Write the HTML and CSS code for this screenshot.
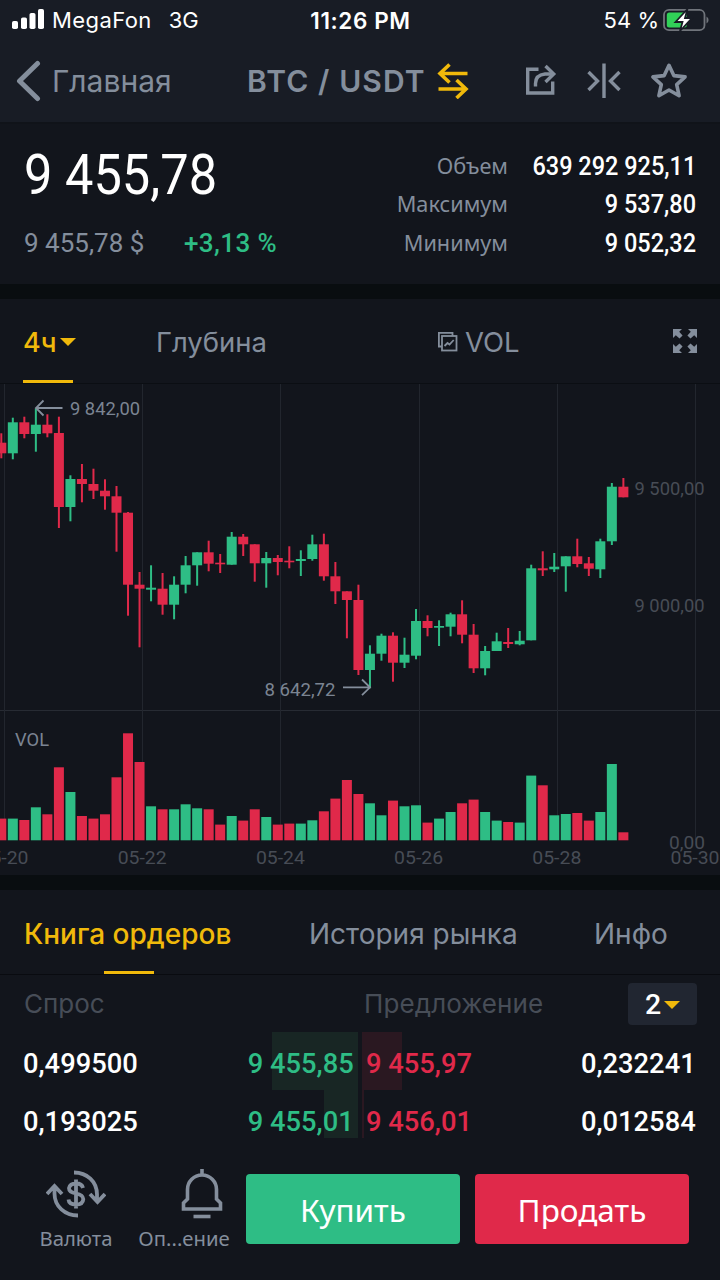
FILE: index.html
```html
<!DOCTYPE html>
<html lang="ru">
<head>
    <meta charset="UTF-8">
    <title>BTC / USDT</title>
    <link rel="stylesheet" href="styles.css">
    <script src="chart.js" defer></script>
</head>
<body>
  <header class="top">
    <div class="status">
      <div class="status-left">
        <svg class="signal" width="32" height="20" viewBox="0 0 32 20">
          <rect x="0" y="12" width="6" height="8" rx="1.8"/>
          <rect x="9" y="8.500" width="6" height="11.500" rx="1.800"/>
          <rect x="17.500" y="4" width="6" height="16" rx="1.800"/>
          <rect x="26" y="0" width="6" height="20" rx="1.800"/>
        </svg>
        <span class="carrier">MegaFon</span>
        <span class="network">3G</span>
      </div>
      <div class="status-time">11:26 PM</div>
      <div class="status-right">
        <span class="battery-text">54 %</span>
        <svg class="battery" width="46" height="24" viewBox="0 0 46 24">
          <rect x="1" y="1.800" width="40.500" height="20.400" rx="5" fill="none" stroke="#70747b" stroke-width="1.800"/>
          <rect x="3.800" y="4.500" width="20" height="15" rx="2.500" fill="#31d158"/>
          <path d="M43.500 8.500a4 4 0 0 1 0 7z" fill="#70747b"/>
          <path d="M24.500 1 12.500 14h7L17 23l12-13h-7z" fill="#fff" stroke="#181c25" stroke-width="1.800"/>
        </svg>
      </div>
    </div>
    <nav class="nav">
      <a class="back">
        <svg width="26" height="42" viewBox="0 0 26 42"><path d="M21.500 3.500 3.500 21l18 17.500" fill="none" stroke="currentColor" stroke-width="5" stroke-linecap="round" stroke-linejoin="round"/></svg>
        <span>Главная</span>
      </a>
      <div class="pair">
        <span>BTC / USDT</span>
        <svg width="32" height="36" viewBox="0 0 32 36" fill="none" stroke="currentColor" stroke-width="3.600">
          <path d="M30.500 10.500H3M12.500 1.500l-9.500 9 9.500 9M1.500 26H29M19.500 17l9.500 9-9.500 9"/>
        </svg>
      </div>
      <div class="actions">
        <svg class="share" width="32" height="34" viewBox="0 0 32 34" fill="none" stroke="currentColor" stroke-width="3.400">
          <path d="M13.500 5.200H2.700V29h25V17.500"/>
          <path d="M10.500 22.500v-3q0-8.500 9.500-9.500h8"/>
          <path d="M20.500 2 28.700 10l-8.200 8"/>
        </svg>
        <svg class="collapse" width="34" height="36" viewBox="0 0 34 36" fill="none" stroke="currentColor" stroke-width="3.400">
          <path d="M17 .5V35M1.500 9l9 9-9 9M32.500 9l-9 9 9 9"/>
        </svg>
        <svg class="star" width="38" height="38" viewBox="0 0 38 38" fill="none" stroke="currentColor" stroke-width="3.600" stroke-linejoin="round">
          <path d="m19 3.300 4.800 10.300 11.300 1.300-8.400 7.700 2.400 11.100L19 28l-10.100 5.700 2.400-11.100-8.400-7.700 11.300-1.300z"/>
        </svg>
      </div>
    </nav>
  </header>

  <section class="summary">
    <div class="price">
      <div class="last num">9 455,78</div>
      <div class="sub">
        <span class="fiat num">9 455,78 $</span>
        <span class="change num">+3,13 %</span>
      </div>
    </div>
    <div class="stats">
      <span class="label">Объем</span><span class="value num">639 292 925,11</span>
      <span class="label">Максимум</span><span class="value num">9 537,80</span>
      <span class="label">Минимум</span><span class="value num">9 052,32</span>
    </div>
  </section>

  <section class="chart-box">
    <div class="chart-tabs">
      <div class="interval">4ч <i class="caret"></i></div>
      <div class="depth">Глубина</div>
      <div class="indicator">
        <svg width="21" height="21" viewBox="0 0 21 21" fill="none" stroke="currentColor" stroke-width="1.800">
          <path d="M5 15.500H1.900V1.900h13.600V5"/>
          <rect x="5" y="5" width="14.500" height="14.500"/>
          <path d="m7.500 15 3-3 2 1.500 4.200-4.500"/>
        </svg>
        <span>VOL</span>
      </div>
      <svg class="fullscreen" width="24" height="24" viewBox="0 0 24 24" fill="currentColor">
        <path id="corner" d="M0 0h9L6.200 2.800 9.600 6.500 6.500 9.600 2.800 6.200 0 9z"/>
        <use href="#corner" transform="matrix(-1 0 0 1 24 0)"/>
        <use href="#corner" transform="matrix(1 0 0 -1 0 24)"/>
        <use href="#corner" transform="matrix(-1 0 0 -1 24 24)"/>
      </svg>
    </div>
    <svg class="chart" id="chart" width="720" height="492" viewBox="0 383 720 492"></svg>
  </section>

  <section class="orders">
    <div class="order-tabs">
      <div class="tab active">Книга ордеров</div>
      <div class="tab history">История рынка</div>
      <div class="tab info">Инфо</div>
    </div>
    <div class="book-head">
      <span class="bid-title">Спрос</span>
      <span class="ask-title">Предложение</span>
      <span class="decimals num">2 <i class="caret"></i></span>
    </div>
    <div class="book">
      <div class="row">
        <div class="bid"><i class="depth-bar" style="width:86px"></i><span class="num">0,499500</span><span class="num up">9 455,85</span></div>
        <div class="ask"><i class="depth-bar" style="width:40px"></i><span class="num down">9 455,97</span><span class="num">0,232241</span></div>
      </div>
      <div class="row">
        <div class="bid"><i class="depth-bar" style="width:34px"></i><span class="num">0,193025</span><span class="num up">9 455,01</span></div>
        <div class="ask"><i class="depth-bar" style="width:2px"></i><span class="num down">9 456,01</span><span class="num">0,012584</span></div>
      </div>
    </div>
  </section>

  <footer class="bottom">
    <div class="tool currency">
      <svg width="60" height="50" viewBox="0 0 60 50" fill="none" stroke="currentColor" stroke-width="3.800">
        <path d="M28 3.500c13 0 23 9 23 22v7M44 25l7.500 8L59 25"/>
        <path d="M32 46.500c-13 0-23.500-9-23.500-22v-6M1 25l7.500-8 7.500 8"/>
        <path d="M37 19q-1-4.500-7-4.500t-7 4.700q0 4 7 5.300t7.300 5.600q-.3 5.400-7.300 5.400t-7.500-5M30 10.500v29"/>
      </svg>
      <span>Валюта</span>
    </div>
    <div class="tool alert">
      <svg width="42" height="50" viewBox="0 0 42 50" fill="none" stroke="currentColor" stroke-width="3.600">
        <path d="M21 0v6M6.500 30V20.500a14.500 14.500 0 0 1 29 0V30l-0 0 4 4v6H2.500v-6z"/>
        <path d="M12.500 47.500h17"/>
      </svg>
      <span>Оп...ение</span>
    </div>
    <button class="buy">Купить</button>
    <button class="sell">Продать</button>
  </footer>
</body>
</html>
```
FILE: styles.css
```css
* {
  box-sizing: border-box;
}

body {
  margin: 0;
  width: 720px;
  height: 1280px;
  overflow: hidden;
  background-color: #12151c;
  color: #848e9c;
  font-family: Inter, "Liberation Sans", sans-serif;
}

svg {
  display: block;
  flex: none;
}

.num {
  font-family: Roboto, "Liberation Sans", sans-serif;
  font-weight: 500;
  white-space: nowrap;
}

/* header */
.top {
  height: 124px;
  background-color: #181c25;
  border-bottom: 2px solid #101319;
}

.status {
  display: grid;
  grid-template-columns: 1fr auto 1fr;
  align-items: center;
  height: 40px;
  padding: 0 11px 0 12px;
  color: #fff;
  font-size: 22px;
}

.status-left,
.status-right {
  display: flex;
  align-items: center;
}

.status-right {
  justify-content: flex-end;
}

.signal {
  fill: #fff;
  margin-right: 8px;
  margin-bottom: 2px;
}

.carrier {
  letter-spacing: 0.4px;
}

.network {
  margin-left: 17px;
}

.status-time {
  font-size: 22.5px;
  font-weight: 600;
  letter-spacing: 0.6px;
}

.battery {
  margin-left: 4px;
}

.nav {
  display: flex;
  align-items: center;
  height: 82px;
  padding: 0 32px 0 16px;
}

.back {
  display: flex;
  align-items: center;
  width: 231px;
  font-size: 30px;
}

.back span {
  margin-left: 10px;
}

.pair {
  display: flex;
  align-items: center;
  width: 278px;
  font-size: 30px;
  font-weight: 600;
}

.pair span {
  width: 180px;
  margin-top: -1px;
  letter-spacing: 1.1px;
  white-space: nowrap;
}

.pair svg {
  margin-left: 10px;
  color: #f0b90b;
}

.actions {
  display: flex;
  align-items: center;
  flex: 1;
  justify-content: space-between;
}

/* price summary */
.summary {
  display: flex;
  justify-content: space-between;
  height: 160px;
  padding: 0 24px;
}

.last {
  margin-top: 18px;
  height: 66px;
  line-height: 66px;
  font-size: 55px;
  font-weight: 400;
  color: #fff;
  transform: scaleX(0.92);
  transform-origin: left;
}

.sub {
  display: flex;
  margin-top: 20px;
  font-size: 26px;
  line-height: 30px;
}

.fiat {
  width: 160px;
  font-weight: 400;
}

.change {
  letter-spacing: 0.4px;
}

.change,
.up {
  color: #2ebd85;
}

.down {
  color: #e0294a;
}

.stats {
  display: grid;
  grid-template-columns: auto 174px;
  grid-auto-rows: 38.5px;
  column-gap: 14px;
  align-items: center;
  align-content: start;
  margin-top: 23px;
  text-align: right;
}

.label {
  margin-top: -2px;
  font-family: "Noto Sans", sans-serif;
  font-size: 21.7px;
}

.value {
  color: #fff;
  font-size: 25px;
  transform: scaleX(0.94);
  transform-origin: right;
}

/* chart */
.chart-box {
  height: 591px;
  border-top: 15px solid #090d10;
}

.chart-tabs {
  display: flex;
  align-items: center;
  height: 84px;
  padding: 0 23px 0 23px;
  font-size: 27.5px;
}

.interval {
  display: flex;
  align-items: center;
  width: 50px;
  height: 84px;
  padding-top: 5px;
  margin-right: 83px;
  color: #f0b90b;
  font-size: 27px;
  font-weight: 500;
  white-space: nowrap;
  border-bottom: 3px solid #f0b90b;
}

.caret {
  flex: none;
  margin-left: 3px;
  border: 8px solid transparent;
  border-top-color: #f0b90b;
  border-bottom: 0;
}

.depth {
  width: 281px;
  padding-top: 2px;
}

.indicator {
  display: flex;
  align-items: center;
  flex: 1;
}

.indicator span {
  margin-left: 7px;
  padding-top: 2px;
}

.chart text {
  font-family: Roboto, "Liberation Sans", sans-serif;
  font-size: 19px;
}

/* order book */
.orders {
  border-top: 15px solid #090d10;
}

.order-tabs {
  display: flex;
  height: 85px;
  padding-left: 24px;
  border-bottom: 1px solid #090b10;
  font-size: 28px;
  line-height: 88px;
}

.tab {
  flex: none;
}

.tab.active {
  position: relative;
  width: 209px;
  margin-right: 76px;
  color: #f0b90b;
  font-weight: 500;
}

.tab.active::after {
  content: "";
  position: absolute;
  left: 80px;
  bottom: 0;
  width: 50px;
  height: 3px;
  background-color: #f0b90b;
}

.tab.history {
  width: 285px;
}

.book-head {
  display: flex;
  align-items: center;
  height: 57px;
  padding: 0 23px 0 24px;
  font-size: 26px;
  color: #474d57;
}

.bid-title {
  width: 340px;
}

.ask-title {
  flex: 1;
  letter-spacing: 0.1px;
}

.decimals {
  display: flex;
  align-items: center;
  justify-content: center;
  width: 69px;
  height: 42px;
  padding-top: 2px;
  border-radius: 4px;
  background-color: #212631;
  color: #fff;
  font-size: 28.5px;
}

.row {
  display: flex;
  justify-content: space-between;
  height: 58px;
  color: #fff;
  font-size: 28px;
}

.bid,
.ask {
  position: relative;
  display: flex;
  align-items: center;
  justify-content: space-between;
  width: 358px;
  height: 58px;
}

.bid {
  padding: 4px 4px 0 23px;
}

.ask {
  padding: 4px 24px 0 4px;
}

/* digits run a little narrow in the book */
.row .num {
  position: relative;
  transform: scaleX(0.975);
  transform-origin: left;
}

.row .num:last-child {
  transform-origin: right;
}

.depth-bar {
  position: absolute;
  top: 0;
  height: 58px;
}

.bid .depth-bar {
  right: 0;
  background-color: #182624;
}

.ask .depth-bar {
  left: 0;
  background-color: #2a1821;
}

.row:last-child .depth-bar {
  height: 48px;
}

/* bottom bar */
.bottom {
  display: flex;
  align-items: flex-start;
  margin-top: 21px;
}

.tool {
  display: flex;
  flex-direction: column;
  align-items: center;
  font-family: "Noto Sans", sans-serif;
  font-size: 20.3px;
  white-space: nowrap;
}

.tool span {
  margin-top: 5px;
}

.currency {
  width: 90px;
  margin-left: 31px;
}

.alert {
  width: 94px;
  margin-left: 16px;
  margin-right: 6px;
}

.alert svg {
  margin-left: 36px;
}

.buy,
.sell {
  width: 214px;
  height: 70px;
  margin: 5px 0 0 9px;
  padding: 0;
  border: 0;
  border-radius: 4px;
  background-color: #2ebd85;
  color: #fff;
  font: 31.5px "Noto Sans", sans-serif;
}

.sell {
  margin-left: 15px;
  background-color: #e0294a;
}
```
FILE: chart.js
```js
// up/down, body top, body bottom, wick top, wick bottom, volume
const candles = [
  [0, 442.7, 453.3, 433.3, 458.3, 21.7],
  [1, 422.3, 453.3, 417.7, 459.3, 21.7],
  [0, 422.3, 434, 416.7, 438.3, 20.3],
  [1, 424.7, 434, 408.3, 451.7, 33],
  [0, 424.7, 433.3, 414.3, 437.3, 26],
  [0, 433, 507, 416.7, 528, 73],
  [1, 479, 507, 475.3, 521.3, 48.3],
  [0, 479, 484, 464, 502.3, 24.3],
  [0, 484, 490.7, 468.7, 499, 21.7],
  [0, 490.7, 496.3, 479.3, 509.7, 26],
  [0, 496.3, 512.7, 486, 551.7, 63],
  [0, 512.7, 584.7, 512, 615.7, 107],
  [0, 584.7, 588.7, 572, 647.3, 78.3],
  [1, 587.7, 589.7, 565.3, 601.3, 34],
  [0, 588.7, 604.7, 573, 614.7, 31],
  [1, 584.7, 604.7, 576.3, 619.3, 31],
  [1, 565.3, 584.7, 556, 593.3, 36],
  [1, 552.3, 565.3, 552.3, 585.7, 32],
  [0, 552.3, 563.7, 540.7, 571.3, 31],
  [0, 562.7, 564.3, 554, 573, 15.7],
  [1, 536.7, 564.7, 532, 564.7, 24.3],
  [0, 536.7, 544.3, 534, 556, 19.7],
  [0, 544.3, 563.3, 544.3, 581.7, 31],
  [1, 558, 563.3, 552, 587.7, 23.3],
  [0, 558, 562, 555, 575.3, 15.7],
  [0, 560.7, 562.3, 546.3, 568.3, 16.7],
  [1, 559, 561, 550.3, 576, 16.7],
  [1, 544.3, 559, 534.7, 560.7, 20],
  [0, 544.3, 576.3, 533.7, 580.7, 29],
  [0, 576.3, 591.3, 562, 604, 41.7],
  [0, 591.3, 600, 591.3, 638.3, 60.3],
  [0, 600, 670, 584.7, 675, 46.3],
  [1, 653.7, 670, 645.3, 688.3, 37],
  [1, 635.7, 653.7, 633.7, 660.7, 25],
  [0, 635.7, 662.7, 632.3, 681.7, 39.7],
  [1, 654.7, 662.7, 637.7, 668, 34],
  [1, 621, 655.7, 609, 659.3, 35],
  [0, 621, 628, 615.3, 636.3, 17.7],
  [1, 626, 627.7, 620.3, 646, 21.7],
  [1, 614.3, 626.7, 612.7, 636.3, 28.3],
  [0, 614.3, 634.7, 600.3, 643.3, 37],
  [0, 634.7, 668.3, 624, 673, 40.7],
  [1, 651, 668.3, 646, 675.3, 28.3],
  [1, 641.3, 651, 632.7, 651, 19.7],
  [0, 642, 644, 628, 648, 18.3],
  [1, 640.7, 644.3, 631, 645.3, 17.7],
  [1, 568.3, 640.3, 564.7, 640.3, 64.7],
  [0, 568.3, 570.3, 551.3, 576, 55],
  [1, 566.7, 569.3, 553, 572, 25],
  [1, 556.3, 566.3, 556.3, 591.7, 26.3],
  [0, 556.3, 564, 538.7, 567.3, 27.3],
  [0, 563.3, 568.7, 557, 576, 19.7],
  [1, 541.3, 569.3, 538.7, 578, 28.3],
  [1, 486.7, 541.3, 483, 545, 76.3],
  [0, 486.7, 497.3, 478, 497.3, 8]
];

const step = 11.52;
const base = 840.3;
let out = '<path d="M0 383.500H720" stroke="#0b0e13"/>';

// grid
out += '<path d="M0 710.500H720" stroke="#272b33"/>';
for (let x = 4.5; x < 720; x += 138.2) {
  out += `<path d="M${Math.floor(x) + 0.5} 384V840" stroke="#22262e"/>`;
}

candles.forEach(([up, top, bottom, high, low, vol], i) => {
  const x = 1.3 + i * step;
  const color = up ? '#2ebd85' : '#e0294a';
  out += `<rect x="${x - 1}" y="${high}" width="2" height="${low - high}" fill="${color}"/>`;
  out += `<rect x="${x - 5}" y="${top}" width="10" height="${bottom - top}" fill="${color}"/>`;
  out += `<rect x="${x - 5}" y="${base - vol}" width="10" height="${vol}" fill="${color}"/>`;
});

// high and low markers
out += '<path d="M62.500 408H36M43.500 400.500 36 408l7.500 7.500M343 687.300h27M362 679.500l8 7.800-8 7.800" fill="none" stroke="#848e9c" stroke-width="1.800"/>';

function label(text, x, y, width, color) {
  out += `<text x="${x}" y="${y}" textLength="${width}" lengthAdjust="spacingAndGlyphs" fill="${color}">${text}</text>`;
}

label('9 842,00', 70, 415.3, 70, '#7b8492');
label('8 642,72', 264.5, 696.4, 71, '#7b8492');
label('VOL', 15, 746.4, 34, '#7b8492');
label('9 500,00', 634.5, 495, 70, '#474c55');
label('9 000,00', 634.5, 612, 70, '#474c55');
label('0,00', 669, 848.7, 36, '#474c55');
['05-20', '05-22', '05-24', '05-26', '05-28', '05-30'].forEach((d, i) => {
  label(d, -20.5 + i * 138.2, 864.4, 49, '#474c55');
});

document.getElementById('chart').innerHTML = out;
```
